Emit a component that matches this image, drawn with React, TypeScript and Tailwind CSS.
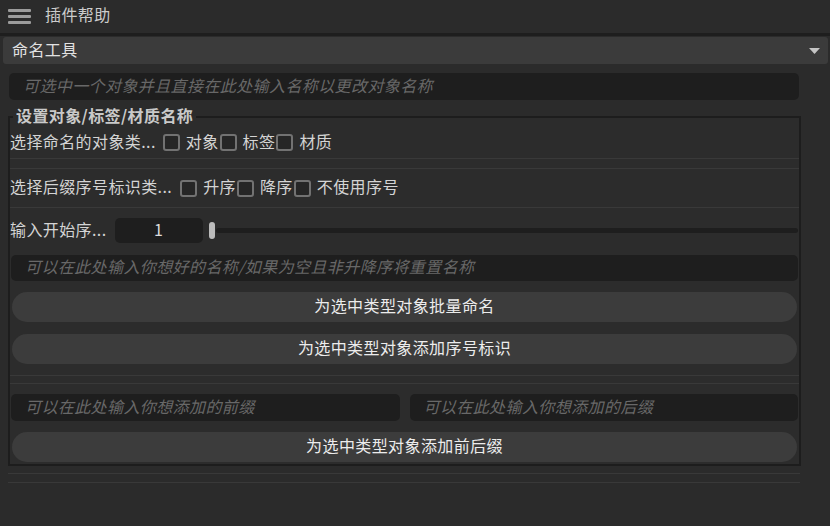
import React from "react";

const FONT = '"Noto Sans CJK SC", "Noto Sans", sans-serif';

// CJK glyphs sit a little low with leading-none, nudge them up
function T({ children, className = "" }: { children: React.ReactNode; className?: string }) {
    return <span className={"relative -top-[2px] " + className}>{children}</span>;
}

function Check({ label }: { label: string }) {
    return (
        <span className="flex items-center">
            <span className="block shrink-0 w-[17px] h-[17px] border-[2px] border-solid border-[#727272] rounded-[3px] bg-[#262626] mr-[6px]" />
            <T>{label}</T>
        </span>
    );
}

function TextField({ placeholder, className = "" }: { placeholder: string; className?: string }) {
    return (
        <div className={"flex items-center bg-[#1e1e1e] rounded-[5px] px-[14px] " + className}>
            <T className="italic text-[#686868] whitespace-nowrap">{placeholder}</T>
        </div>
    );
}

function PillButton({ label, className = "" }: { label: string; className?: string }) {
    return (
        <div className={"h-[30px] mx-[2px] rounded-full bg-[#3c3c3c] flex items-center justify-center text-[#ececec] " + className}>
            <T>{label}</T>
        </div>
    );
}

export default function App() {
    return (
        <div
            className="w-[830px] h-[526px] bg-[#2b2b2b] overflow-hidden text-[16px] tracking-[0.4px] leading-none text-[#d4d4d4]"
            style={{ fontFamily: FONT }}
        >
            {/* top bar */}
            <div className="h-[33px] flex items-center">
                <div className="ml-[8px] w-[23px] flex flex-col gap-[3px]">
                    <span className="h-[3px] bg-[#9c9c9c] rounded-[1px]" />
                    <span className="h-[3px] bg-[#9c9c9c] rounded-[1px]" />
                    <span className="h-[3px] bg-[#9c9c9c] rounded-[1px]" />
                </div>
                <T className="ml-[14px] text-[#cccccc] -top-[3px]">插件帮助</T>
            </div>
            <div className="h-[3px] bg-[#1e1e1e]" />

            {/* tool selector */}
            <div className="mt-[1px] ml-[3px] mr-[2px] h-[27px] bg-[#3b3b3b] rounded-[3px] flex items-center justify-between pl-[9px] pr-[8px]">
                <T className="text-[#e2e2e2]">命名工具</T>
                <svg width="11" height="6" viewBox="0 0 11 6">
                    <path d="M0 0 H11 L5.5 6 Z" fill="#c4c4c4" />
                </svg>
            </div>

            <TextField
                className="mt-[9px] ml-[9px] w-[790px] h-[27px]"
                placeholder="可选中一个对象并且直接在此处输入名称以更改对象名称"
            />

            {/* naming group */}
            <fieldset className="mt-[7px] ml-[8px] w-[793px] min-w-0 border-2 border-[#1d1d1d] bg-[#2c2c2c] pb-[2px]">
                <legend className="ml-[3px] px-[3px] font-bold leading-[20px] text-[#c9c9c9]">
                    <T className="-top-[1px]">设置对象/标签/材质名称</T>
                </legend>

                <div className="h-[31px] flex items-center">
                    <T className="mr-[7px]">选择命名的对象类...</T>
                    <div className="flex items-center gap-[1px]">
                        <Check label="对象" />
                        <Check label="标签" />
                        <Check label="材质" />
                    </div>
                </div>
                <div className="h-[11px] border-y border-[#393939]" />

                <div className="h-[39px] flex items-center border-b border-[#393939]">
                    <T className="mr-[8px]">选择后缀序号标识类...</T>
                    <div className="flex items-center gap-[1px]">
                        <Check label="升序" />
                        <Check label="降序" />
                        <Check label="不使用序号" />
                    </div>
                </div>

                <div className="mt-[10px] h-[25px] flex items-center">
                    <T className="mr-[8px]">输入开始序...</T>
                    <div className="w-[88px] h-[25px] bg-[#1e1e1e] rounded-[5px] flex items-center justify-center text-[#dcdcdc]">
                        <T className="-top-[1px]">1</T>
                    </div>
                    <span className="ml-[6px] w-[6px] h-[17px] rounded-full bg-[#bcbcbc]" />
                    <span className="ml-[1px] mr-[1px] flex-1 h-[5px] rounded-full bg-[#1e1e1e]" />
                </div>

                <TextField
                    className="mt-[12px] mx-[1px] h-[26px]"
                    placeholder="可以在此处输入你想好的名称/如果为空且非升降序将重置名称"
                />
                <PillButton className="mt-[11px]" label="为选中类型对象批量命名" />
                <PillButton className="mt-[12px]" label="为选中类型对象添加序号标识" />

                <div className="mt-[11px] h-[9px] border-y border-[#393939]" />

                <div className="mt-[10px] mx-[1px] flex gap-[10px]">
                    <TextField className="flex-1 h-[27px]" placeholder="可以在此处输入你想添加的前缀" />
                    <TextField className="flex-1 h-[27px]" placeholder="可以在此处输入你想添加的后缀" />
                </div>
                <PillButton className="mt-[11px]" label="为选中类型对象添加前后缀" />
            </fieldset>

            <div className="mt-[7px] ml-[8px] w-[792px] h-[10px] border-y border-[#393939]" />
        </div>
    );
}
